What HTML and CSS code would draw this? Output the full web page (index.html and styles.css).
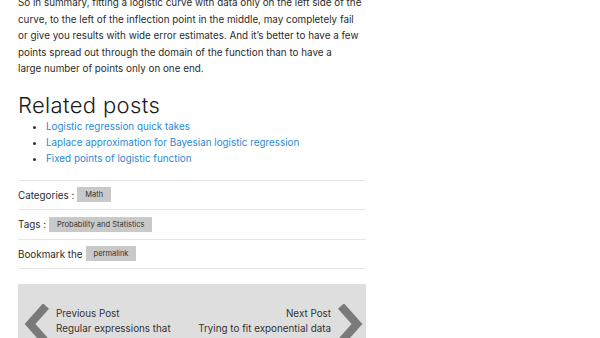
FILE: index.html
```html
<!DOCTYPE html>
<html>
<head>
<meta charset="utf-8">
<link rel="stylesheet" href="styles.css">
</head>
<body>
<main class="post">
  <p class="summary">So in summary, fitting a logistic curve with data only on the left side of the curve, to the left of the inflection point in the middle, may completely fail or give you results with wide error estimates. And it’s better to have a few points spread out through the domain of the function than to have a large&nbsp;number of points only on one end.</p>
  <h2 class="related-title">Related posts</h2>
  <ul class="related-list">
    <li><a href="#">Logistic regression quick takes</a></li>
    <li><a href="#">Laplace approximation for Bayesian logistic regression</a></li>
    <li><a href="#">Fixed points of logistic function</a></li>
  </ul>
  <div class="meta">
    <div class="meta-row">Categories : <span class="badge">Math</span></div>
    <div class="meta-row">Tags : <span class="badge">Probability and Statistics</span></div>
    <div class="meta-row">Bookmark the <span class="badge">permalink</span></div>
  </div>
  <nav class="post-nav">
    <div class="nav-prev">
      <svg class="chev" viewBox="0 0 26 42" width="26" height="42"><polyline points="23,2 7,20 23,38" fill="none" stroke="#7a7a7a" stroke-width="8"/></svg>
      <div class="nav-text">
        <div class="nav-label">Previous Post</div>
        <div class="nav-title">Regular expressions that cross lines</div>
      </div>
    </div>
    <div class="nav-next">
      <div class="nav-text right">
        <div class="nav-label">Next Post</div>
        <div class="nav-title">Trying to fit exponential data</div>
      </div>
      <svg class="chev" viewBox="0 0 26 42" width="26" height="42"><polyline points="3,2 19,20 3,38" fill="none" stroke="#7a7a7a" stroke-width="8"/></svg>
    </div>
  </nav>
</main>
</body>
</html>
```
FILE: styles.css
```css
html, body {
  margin: 0;
  padding: 0;
  background: #fff;
}
body {
  font-family: Inter, sans-serif;
  color: #2b2b2b;
  overflow: hidden;
}
.post {
  width: 348px;
  margin: -6px 0 0 18px;
}
.summary {
  margin: 0;
  font-size: 9.85px;
  line-height: 16.5px;
}
.related-title {
  margin: 14px 0 0;
  font-weight: 300;
  font-size: 22px;
  letter-spacing: 0.35px;
  line-height: 28px;
  color: #1a1a1a;
}
.related-list {
  margin: -1px 0 0;
  padding-left: 28px;
  font-size: 9.85px;
  line-height: 16px;
}
.related-list li::marker {
  color: #333;
}
.related-list a {
  color: #2a8ad3;
  text-decoration: none;
}
.meta {
  margin-top: 14px;
  border-top: 1px solid #e6e6e6;
}
.meta-row {
  display: flex;
  align-items: center;
  gap: 3px;
  height: 28.5px;
  border-bottom: 1px solid #e6e6e6;
  font-size: 9.85px;
}
.badge {
  background: #c9c9c9;
  color: #333;
  font-size: 7.5px;
  padding: 0 8px;
  height: 15px;
  line-height: 15px;
}
.post-nav {
  margin-top: 15px;
  background: #dedede;
  height: 80px;
  display: flex;
  justify-content: space-between;
  padding: 20px 5px 0 5px;
  box-sizing: border-box;
}
.nav-prev, .nav-next {
  display: flex;
  align-items: flex-start;
  gap: 7px;
}
.chev {
  flex: none;
}
.nav-text {
  margin-top: 2px;
  font-size: 9.85px;
  line-height: 14.5px;
  color: #333;
  width: 125px;
}
.nav-text.right {
  text-align: right;
  width: 150px;
}
```
